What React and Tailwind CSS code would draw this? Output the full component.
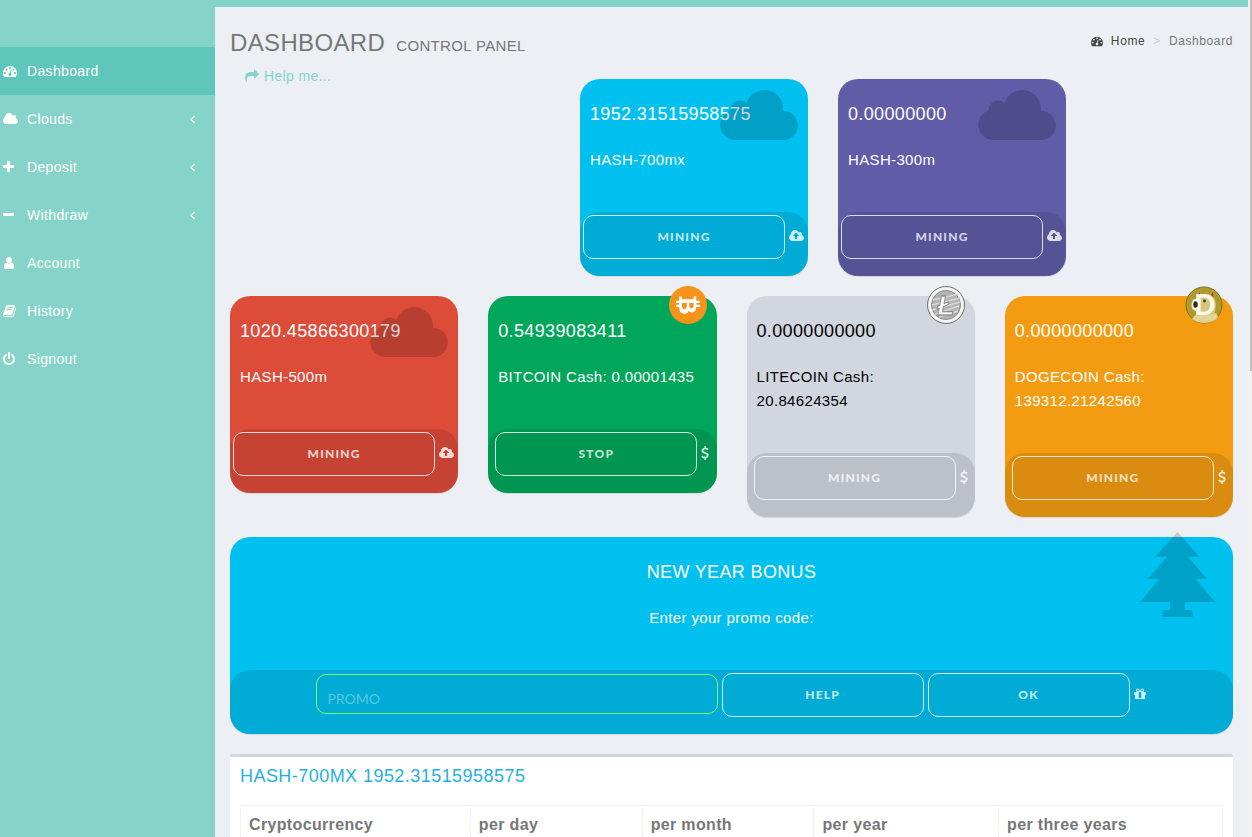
import { FaBtc } from 'react-icons/fa';

const ICONS = {
  dashboard: 'M384 1152q0-53-37.5-90.5t-90.5-37.5-90.5 37.5-37.5 90.5 37.5 90.5 90.5 37.5 90.5-37.5 37.5-90.5zm192-448q0-53-37.5-90.5t-90.5-37.5-90.5 37.5-37.5 90.5 37.5 90.5 90.5 37.5 90.5-37.5 37.5-90.5zm428 481l101-382q6-26-7.5-48.5t-38.5-29.5-48 6.5-30 39.5l-101 382q-60 5-107 43.5t-63 98.5q-20 77 20 146t117 89 146-20 89-117q16-60-6-117t-72-91zm660-33q0-53-37.5-90.5t-90.5-37.5-90.5 37.5-37.5 90.5 37.5 90.5 90.5 37.5 90.5-37.5 37.5-90.5zm-640-640q0-53-37.5-90.5t-90.5-37.5-90.5 37.5-37.5 90.5 37.5 90.5 90.5 37.5 90.5-37.5 37.5-90.5zm448 192q0-53-37.5-90.5t-90.5-37.5-90.5 37.5-37.5 90.5 37.5 90.5 90.5 37.5 90.5-37.5 37.5-90.5zm320 448q0 261-141 483-19 29-54 29h-1402q-35 0-54-29-141-221-141-483 0-182 71-348t191-286 286-191 348-71 348 71 286 191 191 286 71 348z',
  cloud: 'M1920 1152q0 159-112.500 271.500t-271.500 112.500h-1088q-185 0-316.500-131.500t-131.500-316.500q0-132 71-241.500t187-163.500q-2-28-2-43 0-212 150-362t362-150q158 0 286.500 88t187.500 230q70-62 166-62 106 0 181 75t75 181q0 75-41 138 129 30 213 134.500t84 239.500z',
  upload: 'M1280 864q0-14-9-23l-352-352q-9-9-23-9t-23 9l-351 351q-10 12-10 24 0 14 9 23t23 9h224v352q0 13 9.500 22.500t22.500 9.500h192q13 0 22.500-9.500t9.500-22.500v-352h224q13 0 22.500-9.500t9.500-22.500zm640 288q0 159-112.500 271.500t-271.500 112.500h-1088q-185 0-316.500-131.500t-131.500-316.500q0-130 70-240t188-165q-2-30-2-43 0-212 150-362t362-150q156 0 285.500 87t188.500 231q71-62 166-62 106 0 181 75t75 181q0 76-41 138 130 31 213.500 135.500t83.500 238.500z',
  plus: 'M1408 736v192q0 40-28 68t-68 28h-416v416q0 40-28 68t-68 28h-192q-40 0-68-28t-28-68v-416h-416q-40 0-68-28t-28-68v-192q0-40 28-68t68-28h416v-416q0-40 28-68t68-28h192q40 0 68 28t28 68v416h416q40 0 68 28t28 68z',
  minus: 'M1408 736v192q0 40-28 68t-68 28h-1216q-40 0-68-28t-28-68v-192q0-40 28-68t68-28h1216q40 0 68 28t28 68z',
  user: 'M1408 1399q0 109-62.5 187t-150.5 78h-854q-88 0-150.5-78t-62.5-187q0-85 8.5-160.5t31.5-152 58.5-131 94-89 134.5-34.5q131 128 313 128t313-128q76 0 134.5 34.5t94 89 58.5 131 31.5 152 8.5 160.5zm-256-887q0 159-112.5 271.5t-271.5 112.5-271.5-112.5-112.5-271.5 112.5-271.5 271.5-112.5 271.5 112.5 112.5 271.5z',
  book: 'M1639 478q40 57 18 129l-275 906q-19 64-76.5 107.5t-122.5 43.5h-923q-77 0-148.5-53.5t-99.5-131.5q-24-67-2-127 0-4 3-27t4-37q1-8-3-21.500t-3-19.500q2-11 8-21t16.500-23.500 16.500-23.500q23-38 45-91.500t30-91.500q3-10 .5-30t-.5-28q3-11 17-28t17-23q21-36 42-92t25-90q1-9-2.500-32t.5-28q4-13 22-30.500t22-22.500q19-26 42.500-84.500t27.500-96.500q1-8-3-25.500t-2-26.500q2-8 9-18t18-23 17-21q8-12 16.500-30.500t15-35 16-36 19.500-32 26.500-23.500 36-11.500 47.500 5.500l-1 3q38-9 51-9h761q74 0 114 56t18 130l-274 906q-36 119-71.500 153.500t-128.500 34.500h-869q-27 0-38 15-11 16-1 43 24 70 144 70h923q29 0 56-15.500t35-41.500l300-987q7-22 5-57 38 15 59 43zm-1064 2q-4 13 2 22.500t20 9.500h608q13 0 25.500-9.500t16.500-22.500l21-64q4-13-2-22.500t-20-9.500h-608q-13 0-25.500 9.500t-16.500 22.500zm-83 256q-4 13 2 22.500t20 9.500h608q13 0 25.500-9.500t16.500-22.500l21-64q4-13-2-22.500t-20-9.500h-608q-13 0-25.500 9.500t-16.500 22.500z',
  power: 'M1536 896q0 156-61 298t-164 245-245 164-298 61-298-61-245-164-164-245-61-298q0-182 80.5-343t226.5-270q43-32 95.5-25t83.5 50q32 42 24.5 94.5t-49.5 84.5q-98 74-151.5 181t-53.5 228q0 104 40.5 198.5t109.5 163.5 163.5 109.5 198.5 40.5 198.5-40.5 163.5-109.5 109.5-163.5 40.5-198.5q0-121-53.5-228t-151.5-181q-42-32-49.5-84.5t24.5-94.5q31-43 84-50t95 25q146 109 226.5 270t80.5 343zm-640-768v640q0 52-38 90t-90 38-90-38-38-90v-640q0-52 38-90t90-38 90 38 38 90z',
  share: 'M1792 640q0 26-19 45l-512 512q-19 19-45 19t-45-19-19-45v-256h-224q-98 0-175.5 6t-154 21.5-133 42.5-105.5 69.5-80 101-48.5 138.5-17.5 181q0 55 5 123 0 6 2.5 23.5t2.5 26.5q0 15-8.5 25t-23.5 10q-16 0-28-17-7-9-13-22t-13.500-30-10.500-24q-127-285-127-451 0-199 53-333 162-403 875-403h224v-256q0-26 19-45t45-19 45 19l512 512q19 19 19 45z',
  angleLeft: 'M627 544q0 13-10 23l-393 393 393 393q10 10 10 23t-10 23l-50 50q-10 10-23 10t-23-10l-466-466q-10-10-10-23t10-23l466-466q10-10 23-10t23 10l50 50q10 10 10 23z',
  gift: 'M928 1356v-716h-320v716q0 25 18 38.500t46 13.500h192q28 0 46-13.500t18-38.500zm-456-844h195l-126-161q-26-31-69-31-40 0-68 28t-28 68 28 68 68 28zm688-96q0-40-28-68t-68-28q-43 0-69 31l-125 161h194q40 0 68-28t28-68zm376 256v320q0 14-9 23t-23 9h-96v416q0 40-28 68t-68 28h-1088q-40 0-68-28t-28-68v-416h-96q-14 0-23-9t-9-23v-320q0-14 9-23t23-9h440q-93 0-158.500-65.500t-65.500-158.500 65.500-158.500 158.500-65.500q107 0 168 77l128 165 128-165q61-77 168-77 93 0 158.500 65.500t65.500 158.500-65.500 158.500-158.500 65.500h440q14 0 23 9t9 23z',
  dollar: 'M978 1185q0 153-99.5 263.500t-258.500 136.500v175q0 14-9 23t-23 9h-135q-13 0-22.500-9.500t-9.500-22.500v-175q-66-9-127.500-31t-101.500-44.500-74-48-46.500-37.500-17.500-18q-17-21-2-41l103-135q7-10 23-12 15-2 24 9l2 2q113 99 243 125 37 8 74 8 81 0 142.500-43t61.500-122q0-28-15-53t-33.500-42-58.500-37.500-66-32-80-32.500q-39-16-61.500-25t-61.500-26.500-62.500-31-56.500-35.500-53.500-42.500-43.500-49-35.500-58-21-66.500-8.500-78q0-138 98-242t255-134v-180q0-13 9.500-22.500t22.500-9.500h135q14 0 23 9t9 23v176q57 6 110.500 23t87 33.500 63.500 37.500 39 29 15 14q17 18 5 38l-81 146q-8 15-23 16-14 3-27-7-3-3-14.500-12t-39-26.500-58.500-32-74.500-26-85.500-11.500q-95 0-155 43t-60 111q0 26 8.500 48t29.500 41.500 39.500 33 56 31 60.500 27 70 27.500q53 20 81 31.500t76 35 75.500 42.500 62 50 53 63.500 31.500 76.500 13 94z',
};

// Narrow glyphs get their own advance width, the rest are square
const VIEW_BOXES = {
  angleLeft: '0 0 640 1792',
  dollar: '0 0 1024 1792',
  gift: '0 0 1664 1792',
};

const Icon = ({ name, className = 'h-3.5' }) => (
  <svg viewBox={VIEW_BOXES[name] || '0 0 1792 1792'} className={`w-auto shrink-0 overflow-visible ${className}`} fill="currentColor" aria-hidden="true">
    <path d={ICONS[name]} />
  </svg>
);

const menu = [
  { label: 'Dashboard', icon: 'dashboard', active: true },
  { label: 'Clouds', icon: 'cloud', nested: true },
  { label: 'Deposit', icon: 'plus', nested: true },
  { label: 'Withdraw', icon: 'minus', nested: true },
  { label: 'Account', icon: 'user' },
  { label: 'History', icon: 'book' },
  { label: 'Signout', icon: 'power' },
];

const Sidebar = () => (
  <nav className="w-[215px] shrink-0 bg-[#86d4c9] pt-[47px] text-white">
    {menu.map((item) => (
      <a
        key={item.label}
        href="#"
        className={`flex h-12 items-center pr-5 pl-[3px] ${item.active ? 'bg-[#5ec6ba]' : ''}`}
      >
        <span className="w-6 shrink-0">
          <Icon name={item.icon} />
        </span>
        <span className="flex-1">{item.label}</span>
        {item.nested && <Icon name="angleLeft" />}
      </a>
    ))}
  </nav>
);

const BigCloud = () => (
  <svg viewBox="0 0 236 152" className="absolute top-[11px] right-2.5 h-[50px] w-[78px]" aria-hidden="true">
    <g opacity="0.16">
      <circle cx="46" cy="106" r="46" />
      <circle cx="61" cy="62" r="30" />
      <circle cx="134" cy="57" r="57" />
      <circle cx="192" cy="108" r="44" />
      <path d="M46 152V60L80 50H188L192 64V152Z" />
    </g>
  </svg>
);

const BitcoinCoin = () => (
  <span className="absolute -top-2.5 right-2.5 flex size-[38px] items-center justify-center rounded-full bg-[#f7931a] text-white">
    <FaBtc className="size-6 rotate-90" />
  </span>
);

const LitecoinCoin = () => (
  <svg viewBox="0 0 38 38" className="absolute -top-2.5 right-2.5 size-[38px]" aria-hidden="true">
    <circle cx="19" cy="19" r="18.500" fill="#f4f4f4" stroke="#6f6f6f" />
    <circle cx="19" cy="19" r="14.500" fill="#b4b4b4" stroke="#8a8a8a" />
    <path d="M6 14l26-6M5 19l28-7M5 24l28-8M8 28l24-8M12 31l19-6" stroke="#d6d6d6" strokeWidth="1.600" />
    <text x="19" y="28.500" textAnchor="middle" fontFamily="Liberation Sans, sans-serif" fontStyle="italic" fontWeight="700" fontSize="28" fill="#fff" stroke="#777" strokeWidth="0.800">Ł</text>
  </svg>
);

const DogecoinCoin = () => (
  <svg viewBox="0 0 38 38" className="absolute -top-2.5 right-2.5 size-[38px]" aria-hidden="true">
    <circle cx="19" cy="19" r="18" fill="#b09a2e" stroke="#84701d" />
    <path d="M12 11l1-6 5 4h6l4-5 2 9-5 8H12z" fill="#c8a04a" />
    <path d="M14 6l3 4-4 1zM28 6l-3 4 4 3z" fill="#8a4f24" />
    <path d="M12 12q3-4 9-4 7 0 9 6 2 7-1 14l3 5q-6 4-13 4-6 0-10-3l3-8q-5-2-5-7 0-5 5-7z" fill="#d6c67c" />
    <path d="M7 33q4-6 11-5 6 2 13-1l2 4q-6 5.500-14 5.500-7 0-12-3.500z" fill="#e0d594" />
    <text x="20" y="29" textAnchor="middle" fontFamily="Lato, sans-serif" fontWeight="900" fontSize="28" fill="#fbf8ea">D</text>
    <path d="M8 14q3-2 5-1v12q-4 0-6-3-1-5 1-8z" fill="#fbf8ea" />
    <ellipse cx="10.500" cy="18.500" rx="2.200" ry="3.300" fill="#2d2a22" />
    <circle cx="19.500" cy="15" r="1.400" fill="#3c351f" />
  </svg>
);

const Tree = () => (
  <svg viewBox="0 0 224 254" className="absolute -top-[5px] right-[18px] h-[85px] w-[75px]" fillOpacity="0.16" aria-hidden="true">
    <path d="M112 0L177 74H143L200 140H166L224 209H134V233H150Q157 233 157 240V254H67V240Q67 233 74 233H90V209H0L58 140H23L81 74H45Z" />
  </svg>
);

const PillButton = ({ children }) => (
  <button
    type="button"
    className="h-11 w-[202px] rounded-[10px] border border-white/80 font-[Lato,sans-serif] text-xs font-black tracking-widest text-white/75"
  >
    {children}
  </button>
);

const CardFooter = ({ icon, children }) => (
  <div className="flex h-16 items-start justify-center gap-1 rounded-[20px] bg-black/10 pt-[3px] text-white/80">
    {children}
    <span className={`flex h-[42px] items-center ${icon === 'upload' ? 'pr-0.5' : ''}`}>
      <Icon name={icon} />
    </span>
  </div>
);

const MiningCard = ({ value, label, color, art, icon, action }) => (
  <section className={`relative rounded-[20px] shadow-[0_1px_1px_rgba(0,0,0,0.1)] ${color}`}>
    <div className="px-2.5 pt-[23px] pb-10">
      <h3 className="mb-[22px] text-lg leading-6">{value}</h3>
      <p className="text-[15px] leading-6">{label}</p>
    </div>
    {art}
    <CardFooter icon={icon}>
      <PillButton>{action}</PillButton>
    </CardFooter>
  </section>
);

const periods = [
  { label: 'Cryptocurrency', width: 'w-[23.4%]' },
  { label: 'per day', width: 'w-[17.5%]' },
  { label: 'per month', width: 'w-[17.5%]' },
  { label: 'per year', width: 'w-[18.8%]' },
  { label: 'per three years', width: 'w-[22.8%]' },
];

export default function App() {
  return (
    <div className="flex h-screen overflow-hidden bg-[#ecf0f5] font-['Liberation_Sans',Arial,sans-serif] text-sm tracking-wide">
      <Sidebar />
      <main className="flex min-w-0 flex-1 flex-col border-t-[7px] border-[#86d4c9] px-[15px]">
        <header className="flex justify-between pt-5 pb-1 text-[#777]">
          <h1 className="text-2xl leading-8">
            DASHBOARD <small className="ml-1 text-[15px]">CONTROL PANEL</small>
          </h1>
          <ol className="flex items-center self-start pt-1.5 text-xs tracking-wider">
            <li>
              <a href="#" className="flex items-center gap-2 text-[#444]">
                <Icon name="dashboard" className="h-3" />
                Home
              </a>
            </li>
            <li className="px-2 text-[#ccc]">&gt;</li>
            <li>Dashboard</li>
          </ol>
        </header>

        <div className="mb-5 flex">
          <div className="w-[183px] shrink-0 pl-[15px]">
            <a href="#" className="flex items-center gap-[5px] leading-5 text-[#86d4c9]">
              <Icon name="share" />
              Help me...
            </a>
          </div>
          <div className="mt-[13px] grid flex-1 grid-cols-[228px_228px] justify-center gap-[30px]">
            <MiningCard value="1952.31515958575" label="HASH-700mx" color="bg-[#00c0ef] text-white" art={<BigCloud />} icon="upload" action="MINING" />
            <MiningCard value="0.00000000" label="HASH-300m" color="bg-[#605ca8] text-white" art={<BigCloud />} icon="upload" action="MINING" />
          </div>
        </div>

        <div className="mb-5 grid grid-cols-4 items-start gap-[30px]">
          <MiningCard value="1020.45866300179" label="HASH-500m" color="bg-[#dd4b39] text-white" art={<BigCloud />} icon="upload" action="MINING" />
          <MiningCard value="0.54939083411" label="BITCOIN Cash: 0.00001435" color="bg-[#00a65a] text-white" art={<BitcoinCoin />} icon="dollar" action="STOP" />
          <MiningCard value="0.0000000000" label="LITECOIN Cash: 20.84624354" color="bg-[#d2d6de] text-black" art={<LitecoinCoin />} icon="dollar" action="MINING" />
          <MiningCard value="0.0000000000" label="DOGECOIN Cash: 139312.21242560" color="bg-[#f39c12] text-white" art={<DogecoinCoin />} icon="dollar" action="MINING" />
        </div>

        <section className="relative mb-5 rounded-[20px] bg-[#00c0ef] text-white shadow-[0_1px_1px_rgba(0,0,0,0.1)]">
          <div className="pt-[23px] pb-10 text-center">
            <h3 className="mb-[22px] text-lg leading-6">NEW YEAR BONUS</h3>
            <label htmlFor="promo" className="block text-[15px] leading-6">Enter your promo code:</label>
          </div>
          <Tree />
          <CardFooter icon="gift">
            <input
              id="promo"
              type="text"
              placeholder="PROMO"
              className="mt-px h-10 w-2/5 rounded-[10px] border border-[#7df866] bg-transparent px-2.5 pt-2 font-[Lato,sans-serif] text-sm tracking-normal placeholder:text-white/35"
            />
            <PillButton>HELP</PillButton>
            <PillButton>OK</PillButton>
          </CardFooter>
        </section>

        <section className="min-h-20 flex-1 rounded-t-[3px] border-t-[3px] border-[#d2d6de] bg-white px-2.5 pt-[7px]">
          <h3 className="text-lg leading-6 tracking-wide text-[#1fb1de]">HASH-700MX 1952.31515958575</h3>
          <table className="mt-[17px] w-full table-fixed border-collapse text-base text-[#777]">
            <thead>
              <tr>
                {periods.map((period) => (
                  <th key={period.label} className={`border border-[#f4f4f4] px-2 pt-[7px] pb-2 text-left font-bold leading-6 ${period.width}`}>
                    {period.label}
                  </th>
                ))}
              </tr>
            </thead>
          </table>
        </section>
      </main>
      <div className="w-1 shrink-0 bg-[#f1f1f1] pl-0.5">
        <div className="h-[371px] bg-[#c1c1c1]" />
      </div>
    </div>
  );
}
